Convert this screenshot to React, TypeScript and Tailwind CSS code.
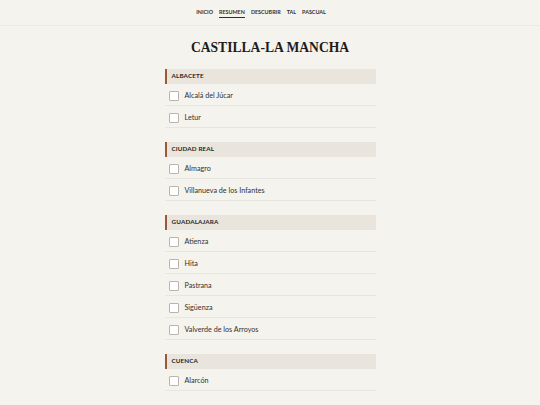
import React, { useState } from 'react';

type Region = { name: string; towns: string[] };

const regions: Region[] = [
  { name: 'Albacete', towns: ['Alcalá del Júcar', 'Letur'] },
  { name: 'Ciudad Real', towns: ['Almagro', 'Villanueva de los Infantes'] },
  { name: 'Guadalajara', towns: ['Atienza', 'Hita', 'Pastrana', 'Sigüenza', 'Valverde de los Arroyos'] },
  { name: 'Cuenca', towns: ['Alarcón'] },
];

const navItems = ['Inicio', 'Resumen', 'Descubrir', 'Tal', 'Pascual'];

const TownRow: React.FC<{ name: string }> = ({ name }) => {
  const [checked, setChecked] = useState(false);
  return (
    <label className="flex items-center h-[22px] border-b border-[#e8e6e0] pl-[4px] pt-[4px] cursor-pointer">
      <input
        type="checkbox"
        checked={checked}
        onChange={e => setChecked(e.target.checked)}
        className="appearance-none w-[10px] h-[10px] bg-white border border-[#b9b5ae] rounded-[1px] checked:bg-[#9a5b34] checked:border-[#9a5b34]"
      />
      <span className="ml-[6px] text-[7.2px] text-[#34312d]">{name}</span>
    </label>
  );
};

export default function App() {
  return (
    <div className="min-h-[405px] bg-[#f4f3ee] text-[#2a2724]" style={{ fontFamily: 'Lato, "Noto Sans", sans-serif' }}>
      <nav className="h-[26px] border-b border-[#ebe9e3] flex justify-center items-center gap-[6px] pt-[1px] pr-[18px]">
        {navItems.map(item => (
          <a
            key={item}
            className={`text-[5.4px] font-bold uppercase text-[#34312d] pb-[1px] ${item === 'Resumen' ? 'border-b border-[#34312d]' : 'border-b border-transparent'}`}
          >
            {item}
          </a>
        ))}
      </nav>

      <h1
        className="text-center text-[13.6px] font-bold leading-none mt-[15px] mb-[14px] text-[#1f1c19]"
        style={{ fontFamily: '"Liberation Serif", "DejaVu Serif", serif' }}
      >
        CASTILLA-LA MANCHA
      </h1>

      <main className="w-[211px] mx-auto flex flex-col gap-[14px] pb-6">
        {regions.map(region => (
          <section key={region.name}>
            <h2 className="h-[15px] flex items-center bg-[#e9e4dc] border-l-2 border-[#9a5b34] pl-[5px] text-[6.3px] font-bold uppercase tracking-[0.02em] text-[#2a2724]">
              {region.name}
            </h2>
            {region.towns.map(t => (
              <TownRow key={t} name={t} />
            ))}
          </section>
        ))}
      </main>
    </div>
  );
}
